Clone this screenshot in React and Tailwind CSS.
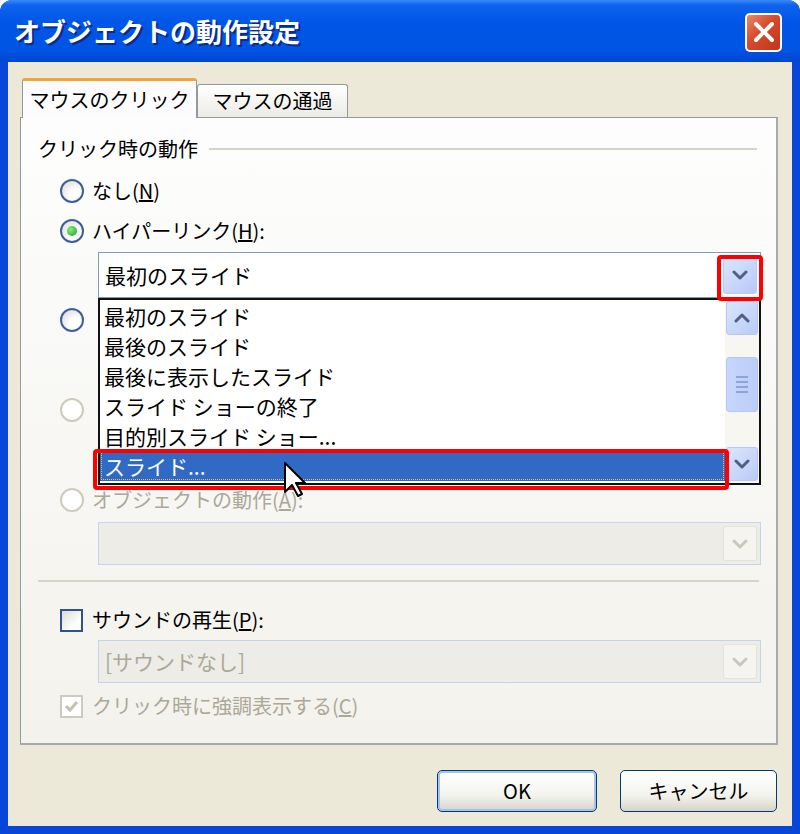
import React from 'react';

const FONT = "font-['Noto_Sans_CJK_JP','Liberation_Sans',sans-serif]";

// little chevron used by combo boxes and the scroll bar
const Chevron = ({ up, color = '#4d6185' }) => (
  <svg width="16" height="10" viewBox="0 0 16 10">
    <path
      d={up ? 'M2 8 L8 2 L14 8' : 'M2 2 L8 8 L14 2'}
      fill="none"
      stroke={color}
      strokeWidth="3"
      strokeLinecap="round"
      strokeLinejoin="round"
    />
  </svg>
);

const Radio = ({ checked, disabled }) => (
  <span
    className={`w-[24px] h-[24px] rounded-full border-2 flex items-center justify-center shrink-0 ${
      disabled
        ? 'border-[#cdcbbd] bg-white'
        : 'border-[#3b5f9c] bg-[radial-gradient(circle_at_70%_75%,#ffffff_30%,#d9d7cc)]'
    }`}
  >
    {checked && (
      <span className="w-[10px] h-[10px] rounded-full bg-[radial-gradient(circle_at_35%_35%,#7ef07e,#1f9e1f)]" />
    )}
  </span>
);

const Check = ({ checked, disabled }) => (
  <span
    className={`w-[23px] h-[23px] border-2 flex items-center justify-center shrink-0 ${
      disabled
        ? 'border-[#cdcbbd] bg-white'
        : 'border-[#2f5291] bg-[linear-gradient(135deg,#dcdad0,#ffffff_70%)]'
    }`}
  >
    {checked && (
      <svg width="15" height="13" viewBox="0 0 15 13">
        <path d="M2 6 L6 10 L13 2" fill="none" stroke={disabled ? '#c3c1b4' : '#21a121'} strokeWidth="3" />
      </svg>
    )}
  </span>
);

const DropBtn = ({ disabled }) => (
  <div
    className={`w-[34px] self-stretch my-[3px] mr-[3px] rounded-[3px] flex items-center justify-center ${
      disabled
        ? 'bg-[#f5f4ef] border border-[#e4e2d9]'
        : 'border border-[#b9cbf3] bg-[linear-gradient(135deg,#dce6fe,#b7c9f6)]'
    }`}
  >
    <Chevron color={disabled ? '#cac8bb' : '#4d6185'} />
  </div>
);

const Combo = ({ children, disabled }) => (
  <div
    className={`h-full flex items-stretch border ${
      disabled ? 'border-[#c4d3ee] bg-[#edece6]' : 'border-[#7f9db9] bg-white'
    }`}
  >
    <div
      className={`flex-1 flex items-center pl-[6px] text-[21px] leading-none ${
        disabled ? 'text-[#aca899]' : 'text-black'
      }`}
    >
      {children}
    </div>
    <DropBtn disabled={disabled} />
  </div>
);

const ScrollBtn = ({ up }) => (
  <div className="w-[32px] h-[34px] rounded-[3px] border border-[#b6c8f2] bg-[linear-gradient(135deg,#dbe5fe,#b9cbf5)] flex items-center justify-center">
    <Chevron up={up} />
  </div>
);

const items = ['最初のスライド', '最後のスライド', '最後に表示したスライド', 'スライド ショーの終了', '目的別スライド ショー...', 'スライド...'];

const Row = ({ h, children, className = '' }) => (
  <div className={`flex items-center shrink-0 ${h} ${className}`}>{children}</div>
);

const Label = ({ children, disabled }) => (
  <span className={`text-[20px] leading-none ${disabled ? 'text-[#aca899]' : 'text-black'}`}>{children}</span>
);

const Cursor = () => (
  <svg width="22" height="36" viewBox="0 0 22 36">
    <path d="M1 1 L1 30 L8 23 L14 34 L18 32 L12 21 L21 21 Z" fill="white" stroke="black" strokeWidth="2" strokeLinejoin="round" />
  </svg>
);

export default function App() {
  return (
    <div className={`w-[800px] h-[834px] bg-white ${FONT}`}>
      <div className="h-full flex flex-col rounded-t-[12px] overflow-hidden bg-[#0846d9]">
        {/* title bar */}
        <div className="h-[62px] shrink-0 flex items-center bg-[linear-gradient(180deg,#3b8cf7_0%,#0f63ee_8%,#0056e6_35%,#0054e3_80%,#0245d2_100%)]">
          <span className="pl-[14px] text-white text-[26px] font-bold leading-none [text-shadow:2px_2px_0_#0a2a8c]">
            オブジェクトの動作設定
          </span>
          <div className="ml-auto mr-[18px] mt-[2px] w-[37px] h-[39px] rounded-[5px] border-2 border-white bg-[linear-gradient(135deg,#ea8a6a,#d6492a_45%,#c2361b)] flex items-center justify-center">
            <svg width="22" height="22" viewBox="0 0 22 22">
              <path d="M3 3 L19 19 M19 3 L3 19" stroke="white" strokeWidth="4" strokeLinecap="round" />
            </svg>
          </div>
        </div>

        {/* client area */}
        <div className="flex-1 mx-[8px] mb-[8px] bg-[#ece9d8] flex flex-col pt-[16px]">
          {/* tabs */}
          <div className="h-[39px] flex items-end pl-[14px]">
            <div className="relative z-10 -mb-[1px] h-[40px] w-[175px] rounded-t-[3px] border border-b-0 border-[#919b9c] border-t-[3px] border-t-[#f2a43a] bg-[#fcfcfe] flex items-center justify-center">
              <Label>マウスのクリック</Label>
            </div>
            <div className="h-[33px] w-[151px] rounded-t-[3px] border border-b-0 border-[#919b9c] bg-[linear-gradient(180deg,#ffffff,#ecebe6)] flex items-center justify-center">
              <Label>マウスの通過</Label>
            </div>
          </div>

          {/* tab panel */}
          <div className="relative ml-[12px] mr-[14px] h-[628px] border border-[#919b9c] border-r-2 border-b-2 border-r-[#a6acac] border-b-[#a6acac] bg-[linear-gradient(180deg,#fdfdfd,#f3f2ec)] flex flex-col pt-[10px] pl-[17px] pr-[15px]">
            <Row h="h-[42px]">
              <Label>クリック時の動作</Label>
              <div className="flex-1 ml-[11px] mr-[4px] border-t-2 border-[#d6d4c5]" />
            </Row>
            <Row h="h-[41px]" className="pl-[22px] gap-[8px]">
              <Radio />
              <Label>なし(<span className="underline">N</span>)</Label>
            </Row>
            <Row h="h-[40px]" className="pl-[22px] gap-[8px]">
              <Radio checked />
              <Label>ハイパーリンク(<span className="underline">H</span>):</Label>
            </Row>
            <div className="h-[46px] mt-[1px] ml-[60px] shrink-0">
              <Combo>最初のスライド</Combo>
            </div>
            {/* options hidden behind the open list */}
            <Row h="h-[44px]" className="pl-[22px]">
              <Radio />
            </Row>
            <div className="h-[46px] shrink-0" />
            <Row h="h-[44px]" className="pl-[22px]">
              <Radio disabled />
            </Row>
            <div className="h-[46px] shrink-0" />
            <Row h="h-[44px]" className="pl-[22px] gap-[8px]">
              <Radio disabled />
              <Label disabled>オブジェクトの動作(<span className="underline">A</span>):</Label>
            </Row>
            <div className="h-[43px] ml-[60px] shrink-0">
              <Combo disabled />
            </div>
            <div className="mt-[15px] mr-[2px] shrink-0 border-t-2 border-[#d6d4c5]" />
            <Row h="h-[40px]" className="mt-[18px] pl-[22px] gap-[9px]">
              <Check />
              <Label>サウンドの再生(<span className="underline">P</span>):</Label>
            </Row>
            <div className="h-[43px] ml-[60px] shrink-0">
              <Combo disabled>[サウンドなし]</Combo>
            </div>
            <Row h="h-[42px]" className="mt-[2px] pl-[22px] gap-[9px]">
              <Check checked disabled />
              <Label disabled>クリック時に強調表示する(<span className="underline">C</span>)</Label>
            </Row>

            {/* open drop-down list */}
            <div className="absolute left-[77px] top-[180px] w-[663px] h-[187px] border-2 border-[#111] bg-white flex">
              <div className="flex-1 flex flex-col pt-[1px]">
                {items.map((t, i) => (
                  <div
                    key={t}
                    className={`h-[30px] shrink-0 flex items-center pl-[4px] text-[21px] leading-none ${
                      i === items.length - 1
                        ? 'bg-[#316ac5] text-white outline-1 outline-dotted outline-[#d9c47a] -outline-offset-2'
                        : 'text-black'
                    }`}
                  >
                    {t}
                  </div>
                ))}
              </div>
              <div className="w-[34px] flex flex-col items-center pt-[1px] pb-[2px] bg-[#f7f6f1]">
                <ScrollBtn up />
                <div className="mt-[22px] w-[32px] h-[55px] rounded-[3px] border border-[#b6c8f2] bg-[linear-gradient(90deg,#c6d6fc,#bccdf7)] flex flex-col items-center justify-center gap-[3px]">
                  <span className="w-[12px] h-[2px] bg-[#8ea4d8]" />
                  <span className="w-[12px] h-[2px] bg-[#8ea4d8]" />
                  <span className="w-[12px] h-[2px] bg-[#8ea4d8]" />
                  <span className="w-[12px] h-[2px] bg-[#8ea4d8]" />
                </div>
                <div className="flex-1" />
                <ScrollBtn />
              </div>
            </div>

            {/* red annotation frames */}
            <div className="absolute left-[696px] top-[137px] w-[46px] h-[46px] border-4 border-[#ff0000] rounded-[4px]" />
            <div className="absolute left-[72px] top-[331px] w-[636px] h-[41px] border-4 border-[#ff0000] rounded-[4px]" />

            {/* mouse pointer */}
            <div className="absolute left-[263px] top-[344px]">
              <Cursor />
            </div>
          </div>

          {/* buttons */}
          <div className="mt-[25px] flex justify-end gap-[23px] pr-[15px]">
            <button className="w-[160px] h-[42px] rounded-[5px] border border-[#003c74] bg-[linear-gradient(180deg,#ffffff,#f3f3ee_60%,#d8d4c8)] shadow-[inset_0_0_0_2px_#a7c2ef] text-[20px] leading-none text-black">
              OK
            </button>
            <button className="w-[157px] h-[42px] rounded-[5px] border border-[#003c74] bg-[linear-gradient(180deg,#ffffff,#f3f3ee_60%,#d8d4c8)] text-[20px] leading-none text-black">
              キャンセル
            </button>
          </div>
        </div>
      </div>
    </div>
  );
}
